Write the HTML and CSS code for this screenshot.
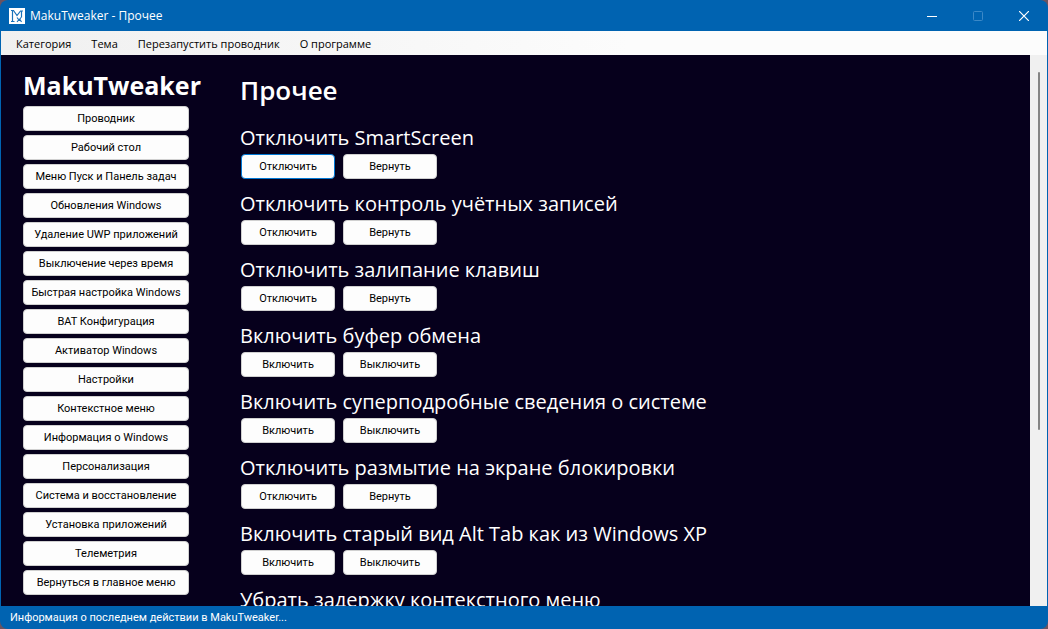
FILE: index.html
```html
<!DOCTYPE html>
<html lang="ru">
<head>
<meta charset="utf-8">
<title>MakuTweaker - Прочее</title>
<link rel="stylesheet" href="styles.css">
</head>
<body>
<div class="window">
  <header class="titlebar">
    <svg class="logo" width="16" height="16" viewBox="0 0 16 16" aria-hidden="true">
      <path fill="#fff" d="M0 0h16v16H0z"/>
      <path fill="none" stroke="#1a72ba" stroke-width="1.200" d="M2 2.500h2.500L8 7.500l3.500-4.500h2.500M3.500 3v10M2 13.500h3.500M12.500 3v6.500M8 9.500l2 2.500 2-2.500M10 11.500L8 14M11 11.500l1.500 2.500"/>
    </svg>
    <span class="caption">MakuTweaker - Прочее</span>
    <div class="window-controls">
      <button class="control" aria-label="Свернуть"><svg width="10" height="10" viewBox="0 0 10 10"><path d="M0 5.500h10" stroke="#fff"/></svg></button>
      <button class="control" aria-label="Развернуть" disabled><svg width="10" height="10" viewBox="0 0 10 10"><rect x=".5" y=".5" width="9" height="9" rx="1" fill="none" stroke="#3c89c7"/></svg></button>
      <button class="control" aria-label="Закрыть"><svg width="10" height="10" viewBox="0 0 10 10"><path d="M0 0l10 10M10 0L0 10" stroke="#fff" stroke-width="1.200"/></svg></button>
    </div>
  </header>
  <nav class="menubar">
    <button class="menu-item">Категория</button>
    <button class="menu-item">Тема</button>
    <button class="menu-item">Перезапустить проводник</button>
    <button class="menu-item">О программе</button>
  </nav>
  <div class="workspace">
    <aside class="sidebar">
      <h1 class="brand">MakuTweaker</h1>
      <nav class="categories">
        <button class="button">Проводник</button>
        <button class="button">Рабочий стол</button>
        <button class="button">Меню Пуск и Панель задач</button>
        <button class="button">Обновления Windows</button>
        <button class="button">Удаление UWP приложений</button>
        <button class="button">Выключение через время</button>
        <button class="button">Быстрая настройка Windows</button>
        <button class="button">BAT Конфигурация</button>
        <button class="button">Активатор Windows</button>
        <button class="button">Настройки</button>
        <button class="button">Контекстное меню</button>
        <button class="button">Информация о Windows</button>
        <button class="button">Персонализация</button>
        <button class="button">Система и восстановление</button>
        <button class="button">Установка приложений</button>
        <button class="button">Телеметрия</button>
        <button class="button">Вернуться в главное меню</button>
      </nav>
    </aside>
    <main class="content">
      <h2 class="page-title">Прочее</h2>
      <section class="tweak">
        <h3 class="tweak-title">Отключить SmartScreen</h3>
        <div class="actions"><button class="button button-default">Отключить</button><button class="button">Вернуть</button></div>
      </section>
      <section class="tweak">
        <h3 class="tweak-title">Отключить контроль учётных записей</h3>
        <div class="actions"><button class="button">Отключить</button><button class="button">Вернуть</button></div>
      </section>
      <section class="tweak">
        <h3 class="tweak-title">Отключить залипание клавиш</h3>
        <div class="actions"><button class="button">Отключить</button><button class="button">Вернуть</button></div>
      </section>
      <section class="tweak">
        <h3 class="tweak-title">Включить буфер обмена</h3>
        <div class="actions"><button class="button">Включить</button><button class="button">Выключить</button></div>
      </section>
      <section class="tweak">
        <h3 class="tweak-title">Включить суперподробные сведения о системе</h3>
        <div class="actions"><button class="button">Включить</button><button class="button">Выключить</button></div>
      </section>
      <section class="tweak">
        <h3 class="tweak-title">Отключить размытие на экране блокировки</h3>
        <div class="actions"><button class="button">Отключить</button><button class="button">Вернуть</button></div>
      </section>
      <section class="tweak">
        <h3 class="tweak-title">Включить старый вид Alt Tab как из Windows XP</h3>
        <div class="actions"><button class="button">Включить</button><button class="button">Выключить</button></div>
      </section>
      <section class="tweak">
        <h3 class="tweak-title">Убрать задержку контекстного меню</h3>
      </section>
    </main>
    <div class="scrollbar"><div class="thumb"></div></div>
  </div>
  <footer class="statusbar">Информация о последнем действии в MakuTweaker...</footer>
</div>
</body>
</html>
```

FILE: styles.css
```css
* {
  box-sizing: border-box;
}

body {
  margin: 0;
  background: #6b5360;
  font-family: "Open Sans", "Noto Sans", sans-serif;
}

button {
  margin: 0;
  padding: 0;
  border: 0;
  background: none;
  color: inherit;
  font: inherit;
  white-space: nowrap;
}

h1,
h2,
h3 {
  margin: 0;
}

.window {
  display: flex;
  flex-direction: column;
  height: 100vh;
  overflow: hidden;
  border-radius: 8px;
  background: #0063b1;
}

.titlebar {
  display: flex;
  flex: none;
  align-items: center;
  height: 31px;
  padding-left: 9px;
  color: #fff;
  font-size: 12px;
}

.logo {
  margin-right: 5px;
}

.window-controls {
  display: flex;
  align-self: stretch;
  margin-left: auto;
  padding-right: 1px;
}

.control {
  display: flex;
  align-items: center;
  justify-content: center;
  width: 46px;
}

.menubar {
  display: flex;
  flex: none;
  gap: 20px;
  height: 24px;
  margin: 0 1px;
  padding-left: 15px;
  background: linear-gradient(90deg, #f0f0f0, #fcfcfc 60%);
  color: #000;
  font-size: 11px;
}

.workspace {
  display: flex;
  flex: 1;
  min-height: 0;
  margin: 0 1px;
  background: #06001c;
  color: #fff;
}

.sidebar {
  flex: none;
  width: 216px;
  padding: 14px 0 0 22px;
}

.brand {
  font-size: 25px;
  font-weight: 700;
  line-height: 32px;
  white-space: nowrap;
}

.categories {
  display: grid;
  gap: 4px;
  width: 166px;
  margin-top: 5px;
}

.button {
  height: 25px;
  border: 1px solid #d0d0d0;
  border-radius: 4px;
  background: #fdfdfd;
  color: #000;
  font-family: Roboto, sans-serif;
  font-size: 11px;
}

.button-default {
  border-color: #0078d4;
}

.content {
  flex: 1;
  min-width: 0;
  padding: 17px 0 0 23px;
  overflow: hidden;
}

.page-title {
  font-size: 26px;
  font-weight: 600;
  line-height: 36px;
}

.tweak {
  height: 66px;
}

.tweak:first-of-type {
  margin-top: 14px;
}

.tweak-title {
  font-size: 20px;
  font-weight: 400;
  line-height: 32px;
  white-space: nowrap;
}

.actions {
  display: flex;
  gap: 8px;
  padding-left: 1px;
}

.actions .button {
  width: 94px;
}

.scrollbar {
  flex: none;
  width: 17px;
  padding: 17px 7px 0 8px;
  background: #f0f0f0;
}

.thumb {
  height: 67%;
  border-radius: 1px;
  background: #858585;
}

.statusbar {
  flex: none;
  height: 23px;
  padding-left: 10px;
  color: #fff;
  font-family: Roboto, sans-serif;
  font-size: 11px;
  line-height: 23px;
}
```
